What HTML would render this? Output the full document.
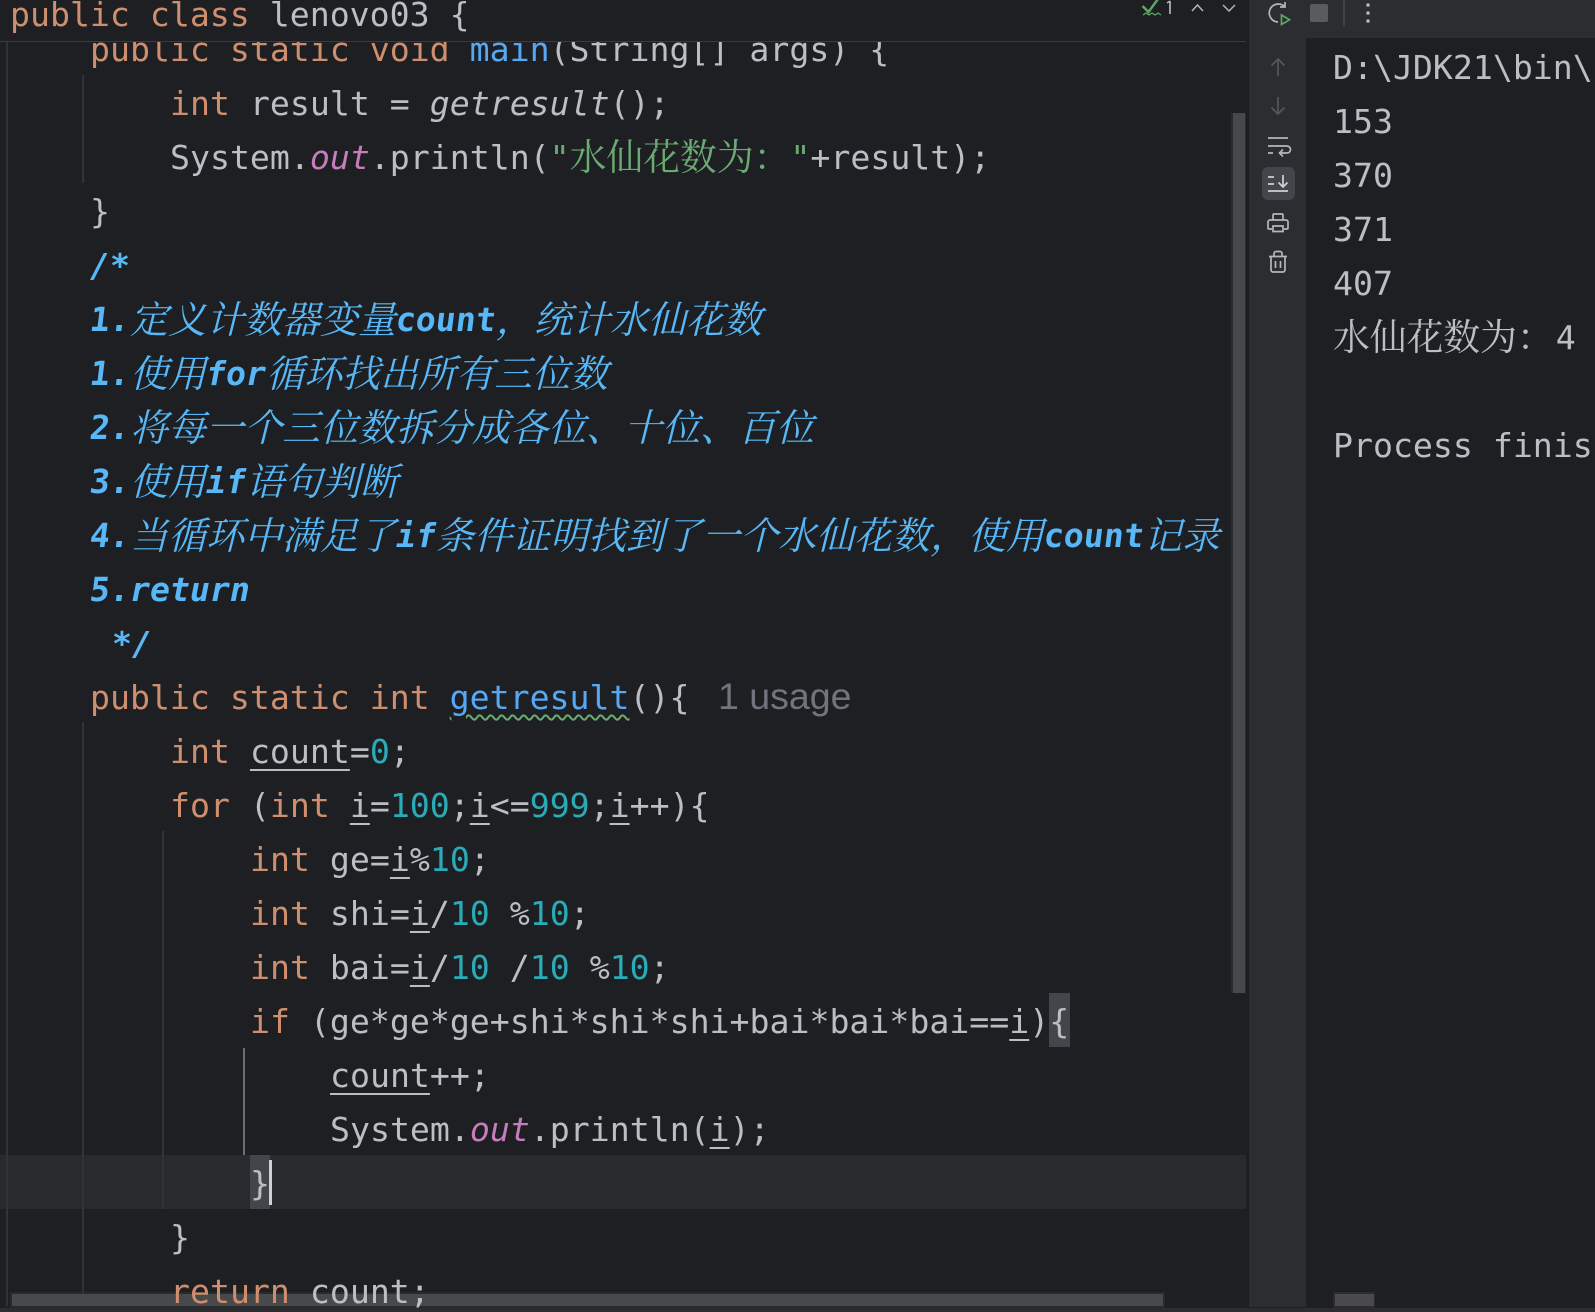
<!DOCTYPE html>
<html><head><meta charset="utf-8"><style>
*{margin:0;padding:0;box-sizing:border-box}
html,body{width:1595px;height:1312px;overflow:hidden;background:#1e1f22}
#r{position:relative;width:1595px;height:1312px;overflow:hidden;background:#1e1f22;font:33.2px/54px "DejaVu Sans Mono","Noto Serif CJK SC",monospace;color:#bcbec4}
.l{position:absolute;white-space:pre;height:54px;line-height:54px}
.k{color:#cf8e6d}.n{color:#2aacb8}.m{color:#56a8f5}.f{color:#c77dbb;font-style:italic}.i{font-style:italic}
.s{color:#6aab73}.z{font-family:"Noto Serif CJK SC",serif;font-size:36.8px;line-height:0;position:relative;top:1px}
.c{color:#58b8f7;font-style:italic;font-weight:bold}
.c .z{font-weight:400;font-size:38px;color:#58b8f7;top:2px}
.up{display:inline-block;font-style:normal;transform:skewX(-7deg)}
.u{text-decoration:underline;text-decoration-thickness:2px;text-underline-offset:6px}
.b{position:absolute}
.g{position:absolute;width:2px;background:#313338}
</style></head><body><div id="r">
<div class="b" style="left:0;top:1155px;width:1246px;height:54px;background:#292a2e"></div>
<div class="b" style="left:250px;top:1155px;width:20px;height:54px;background:#43454a"></div>
<div class="b" style="left:1049px;top:993px;width:21px;height:54px;background:#43454a"></div>
<div class="g" style="left:6px;top:41px;height:1265px"></div>
<div class="g" style="left:82px;top:75px;height:108px"></div>
<div class="g" style="left:82px;top:722px;height:584px"></div>
<div class="g" style="left:162px;top:831px;height:378px"></div>
<div class="g" style="left:243px;top:1048px;height:107px;background:#6b6d72"></div>

<div class="l k" style="left:90px;top:23px">public static void <span class="m">main</span><span style="color:#bcbec4">(String[] args) {</span></div>
<div class="l" style="left:170px;top:77px"><span class="k">int</span> result = <span class="i">getresult</span>();</div>
<div class="l" style="left:170px;top:131px">System.<span class="f">out</span>.println(<span class="s">"<span class="z">水仙花数为：</span>"</span>+result);</div>
<div class="l" style="left:90px;top:185px">}</div>
<div class="l c" style="left:90px;top:239px">/*</div>
<div class="l c" style="left:90px;top:293px"><span class="up">1.</span><span class="z">定义计数器变量</span><span class="up">count</span><span class="z">，统计水仙花数</span></div>
<div class="l c" style="left:90px;top:347px"><span class="up">1.</span><span class="z">使用</span>for<span class="z">循环找出所有三位数</span></div>
<div class="l c" style="left:90px;top:401px"><span class="up">2.</span><span class="z">将每一个三位数拆分成各位、十位、百位</span></div>
<div class="l c" style="left:90px;top:455px"><span class="up">3.</span><span class="z">使用</span>if<span class="z">语句判断</span></div>
<div class="l c" style="left:90px;top:509px"><span class="up">4.</span><span class="z">当循环中满足了</span>if<span class="z">条件证明找到了一个水仙花数，使用</span><span class="up">count</span><span class="z">记录</span></div>
<div class="l c" style="left:90px;top:563px"><span class="up">5.</span>return</div>
<div class="l c" style="left:112px;top:617px">*/</div>
<div class="l k" style="left:90px;top:671px">public static int <span class="m" style="text-decoration:underline wavy #6aab73 2px;text-underline-offset:5px">getresult</span><span style="color:#bcbec4">(){</span><span style="position:absolute;left:628px;top:-2px;font:37.5px/54px 'Liberation Sans',sans-serif;color:#70747c">1 usage</span></div>
<div class="l" style="left:170px;top:725px"><span class="k">int</span> <span class="u">count</span>=<span class="n">0</span>;</div>
<div class="l" style="left:170px;top:779px"><span class="k">for</span> (<span class="k">int</span> <span class="u">i</span>=<span class="n">100</span>;<span class="u">i</span>&lt;=<span class="n">999</span>;<span class="u">i</span>++){</div>
<div class="l" style="left:250px;top:833px"><span class="k">int</span> ge=<span class="u">i</span>%<span class="n">10</span>;</div>
<div class="l" style="left:250px;top:887px"><span class="k">int</span> shi=<span class="u">i</span>/<span class="n">10</span> %<span class="n">10</span>;</div>
<div class="l" style="left:250px;top:941px"><span class="k">int</span> bai=<span class="u">i</span>/<span class="n">10</span> /<span class="n">10</span> %<span class="n">10</span>;</div>
<div class="l" style="left:250px;top:995px"><span class="k">if</span> (ge*ge*ge+shi*shi*shi+bai*bai*bai==<span class="u">i</span>){</div>
<div class="l" style="left:330px;top:1049px"><span class="u">count</span>++;</div>
<div class="l" style="left:330px;top:1103px">System.<span class="f">out</span>.println(<span class="u">i</span>);</div>
<div class="l" style="left:250px;top:1157px">}</div>
<div class="b" style="left:269px;top:1160px;width:3px;height:45px;background:#ced0d6"></div>
<div class="l" style="left:170px;top:1211px">}</div>

<div class="b" style="left:0;top:0;width:1246px;height:42px;background:#1e1f22;border-bottom:1px solid #393b40"></div>
<div class="l" style="left:10px;top:-12px"><span class="k">public class</span> lenovo03 {</div>

<svg class="b" style="left:1138px;top:0" width="110" height="20" fill="none">
<path d="M4.500 6l6 6L20 -1" stroke="#5fa864" stroke-width="2.4"/>
<path d="M5 15l3-2 3 2 3-2 3 2 3-2 3 2" stroke="#5fa864" stroke-width="1.3"/>
<path d="M32 1v13" stroke="#b4b6bc" stroke-width="1.7"/><path d="M29 3l3-2" stroke="#b4b6bc" stroke-width="1.4"/>
<path d="M54 11l5.500-6 5.500 6" stroke="#b4b6bc" stroke-width="1.5"/>
<path d="M85 5l6 6 6-6" stroke="#b4b6bc" stroke-width="1.5"/>
</svg>

<div class="b" style="left:1246px;top:0;width:3px;height:1312px;background:#1e1f22"></div>
<div class="b" style="left:1231px;top:113px;width:15px;height:880px;background:#2b2c2f"></div>
<div class="b" style="left:1233px;top:113px;width:12px;height:880px;background:#47484a"></div>
<div class="b" style="left:1249px;top:0;width:346px;height:38px;background:#2b2d30"></div>
<div class="b" style="left:1249px;top:38px;width:57px;height:1269px;background:#2b2d30"></div>
<div class="b" style="left:0;top:1308px;width:1595px;height:4px;background:#2b2d30"></div>

<div class="l" style="left:1333px;top:41px">D:\JDK21\bin\</div>
<div class="l" style="left:1333px;top:95px">153</div>
<div class="l" style="left:1333px;top:149px">370</div>
<div class="l" style="left:1333px;top:203px">371</div>
<div class="l" style="left:1333px;top:257px">407</div>
<div class="l" style="left:1333px;top:311px"><span class="z" style="margin-right:2px">水仙花数为：</span>4</div>
<div class="l" style="left:1333px;top:419px">Process finished</div>

<div class="b" style="left:1262px;top:167px;width:33px;height:33px;border-radius:6px;background:#43454a"></div>
<svg class="b" style="left:1249px;top:0" width="130" height="290" fill="none" stroke="#b4b6bc" stroke-width="1.7">
<path d="M36 7A9 9 0 1 0 29 22"/><path d="M36 2v5h-5"/>
<path d="M32.500 15v9.500l8-4.700z" stroke="#5fa864"/>
<rect x="61" y="4" width="18" height="18" rx="2" fill="#5a5b5e" stroke="none"/>
<path d="M95 0v27" stroke="#43454a"/>
<circle cx="119" cy="5" r="1.800" fill="#b4b6bc" stroke="none"/><circle cx="119" cy="13" r="1.800" fill="#b4b6bc" stroke="none"/><circle cx="119" cy="21" r="1.800" fill="#b4b6bc" stroke="none"/>
<g stroke="#55575b"><path d="M29 76V59M22.500 65.500L29 59l6.500 6.500"/><path d="M29 97v17M22.500 107.500L29 114l6.500-6.500"/></g>
<path d="M19 138h20M19 146h19a3.500 3.500 0 0 1 0 7h-7M34 149.500l-3.500 3.500 3.500 3.500M19 153h5"/>
<path d="M19 177h6M19 184h6M19 191h20M34 175v12M29.500 182.500L34 187l4.500-4.500" stroke="#ced0d6"/>
<path d="M24 220v-5a1 1 0 0 1 1-1h8a1 1 0 0 1 1 1v5M23 229h-3a1 1 0 0 1-1-1v-6a2 2 0 0 1 2-2h16a2 2 0 0 1 2 2v6a1 1 0 0 1-1 1h-3M24 226h10v5.500H24z"/>
<path d="M20 256.500h18M25 256v-2.500a2 2 0 0 1 2-2h4a2 2 0 0 1 2 2v2.500M22 257v13a2 2 0 0 0 2 2h10a2 2 0 0 0 2-2v-13M26.500 261v7M31.500 261v7"/>
</svg>

<div class="b" style="left:10px;top:1292px;width:1155px;height:16px;background:rgba(50,51,54,.55)"></div>
<div class="b" style="left:12px;top:1294px;width:1151px;height:12px;background:rgba(75,76,78,.9)"></div>
<div class="b" style="left:1333px;top:1292px;width:42px;height:16px;background:#2b2c2f"></div>
<div class="b" style="left:1335px;top:1294px;width:39px;height:12px;background:#4a4a4c"></div>
<div class="l" style="left:170px;top:1265px;height:43px;overflow:hidden"><span class="k">return</span> count;</div>
</div></body></html>
